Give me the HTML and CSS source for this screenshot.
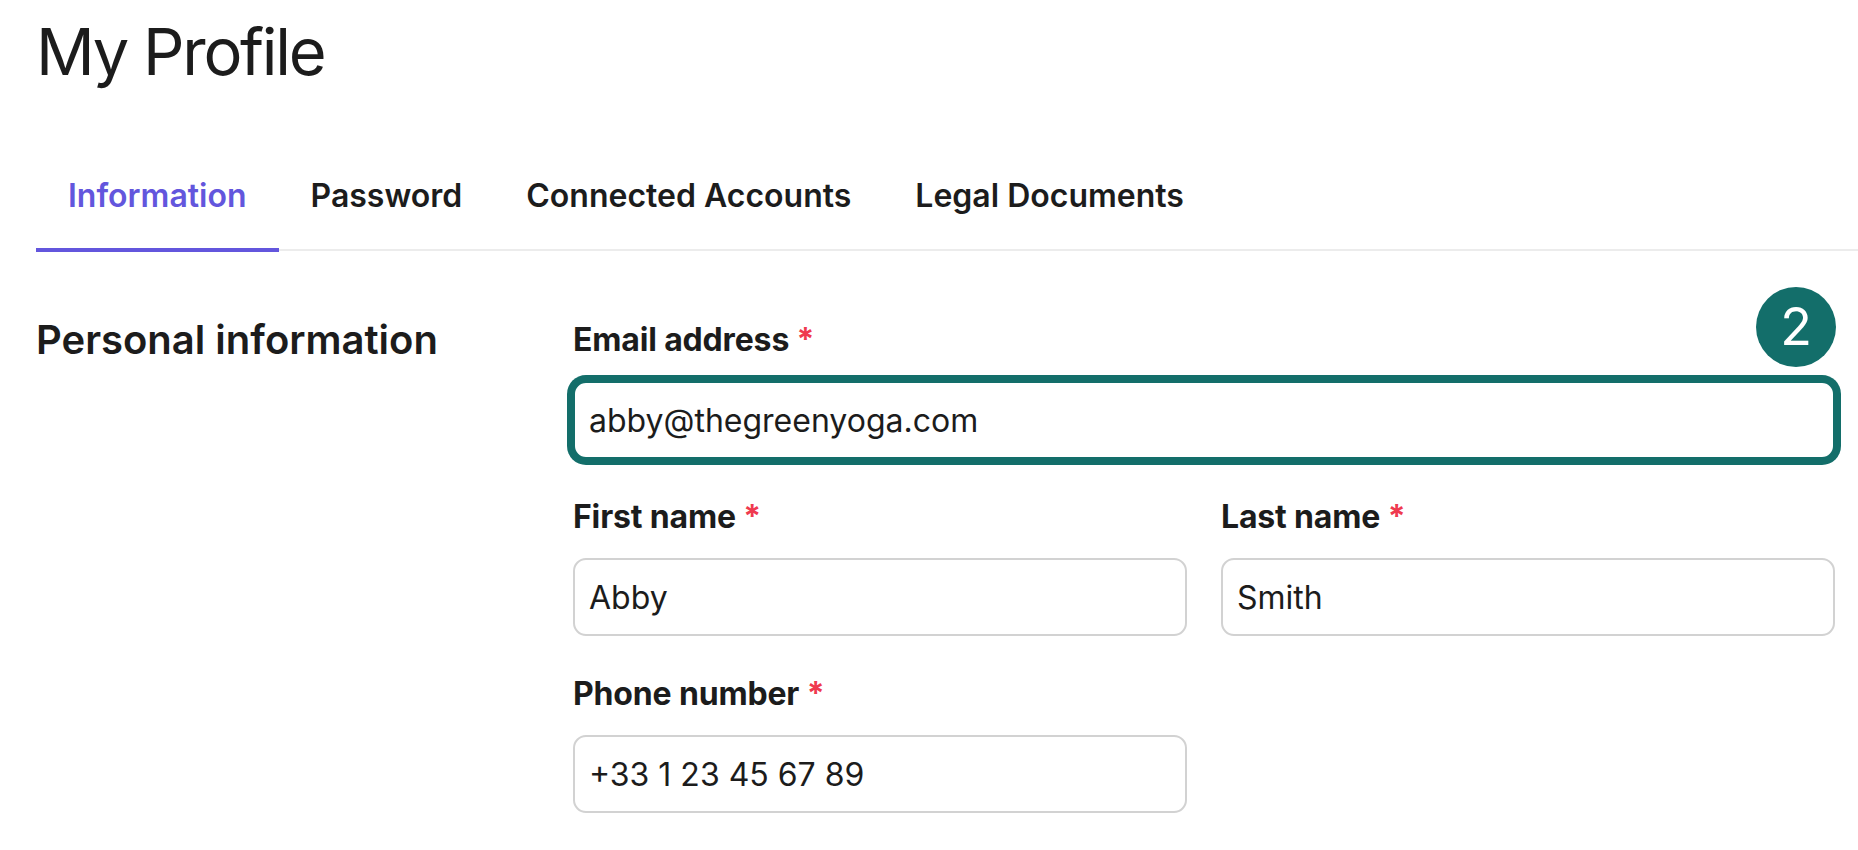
FILE: index.html
```html
<!DOCTYPE html>
<html lang="en">
<head>
    <meta charset="UTF-8">
    <meta name="viewport" content="width=device-width, initial-scale=1.0">
    <title>My Profile</title>
    <link rel="stylesheet" href="styles.css">
</head>
<body>
    <div class="page">
        <h1 class="page-title">My Profile</h1>

        <nav class="tabs">
            <a class="tab active" href="#">Information</a>
            <a class="tab" href="#">Password</a>
            <a class="tab" href="#">Connected Accounts</a>
            <a class="tab" href="#">Legal Documents</a>
        </nav>

        <section class="section">
            <h2 class="section-title">Personal information</h2>

            <form class="form">
                <span class="step-badge">2</span>

                <div class="field full">
                    <label class="label" for="email">Email address <span class="req">*</span></label>
                    <input class="input focused" id="email" type="text" value="abby@thegreenyoga.com">
                </div>

                <div class="field">
                    <label class="label" for="first">First name <span class="req">*</span></label>
                    <input class="input" id="first" type="text" value="Abby">
                </div>

                <div class="field">
                    <label class="label" for="last">Last name <span class="req">*</span></label>
                    <input class="input" id="last" type="text" value="Smith">
                </div>

                <div class="field">
                    <label class="label" for="phone">Phone number <span class="req">*</span></label>
                    <input class="input" id="phone" type="text" value="+33 1 23 45 67 89">
                </div>
            </form>
        </section>
    </div>
</body>
</html>
```

FILE: styles.css
```css
        body {
            margin: 0;
            background-color: #ffffff;
            color: #1c1c1c;
            font-family: Inter, "Noto Sans", Arial, sans-serif;
        }

        .page {
            padding: 19px 23px 0 36px;
        }

        .page-title {
            margin: 0;
            font-size: 65px;
            line-height: 66px;
            font-weight: 400;
            letter-spacing: -0.035em;
        }

        /* tab bar */
        .tabs {
            display: flex;
            margin-top: 91px;
            margin-right: -23px;
            border-bottom: 2px solid #ececec;
        }

        .tab {
            padding: 0 32px 32px;
            margin-bottom: -3px;
            border-bottom: 4px solid transparent;
            font-size: 32px;
            line-height: 40px;
            font-weight: 600;
            color: #1c1c1c;
            text-decoration: none;
        }

        .tab.active {
            color: #6356dd;
            border-bottom-color: #6356dd;
        }

        /* personal information */
        .section {
            display: grid;
            grid-template-columns: 537px 1fr;
            padding-top: 71px;
        }

        .section-title {
            margin: 0;
            font-size: 40px;
            line-height: 36px;
            font-weight: 600;
        }

        .form {
            position: relative;
            display: grid;
            grid-template-columns: 1fr 1fr;
            column-gap: 34px;
            row-gap: 40px;
        }

        .field {
            display: flex;
            flex-direction: column;
            gap: 23px;
        }

        .field.full {
            grid-column: 1 / -1;
        }

        .label {
            font-size: 32px;
            line-height: 36px;
            font-weight: 700;
            letter-spacing: -0.005em;
        }

        .req {
            color: #ef3a4f;
        }

        .input {
            box-sizing: border-box;
            height: 78px;
            padding: 0 14px;
            border: 2px solid #d2d2d2;
            border-radius: 13px;
            font-family: inherit;
            font-size: 32px;
            color: #1c1c1c;
            outline: none;
        }

        .input.focused {
            border-color: #136e6a;
            box-shadow: 0 0 0 6px #136e6a;
        }

        .step-badge {
            position: absolute;
            top: -35px;
            right: -1px;
            width: 80px;
            height: 80px;
            border-radius: 50%;
            background-color: #136e6a;
            color: #ffffff;
            font-size: 52px;
            line-height: 80px;
            text-align: center;
        }
```
